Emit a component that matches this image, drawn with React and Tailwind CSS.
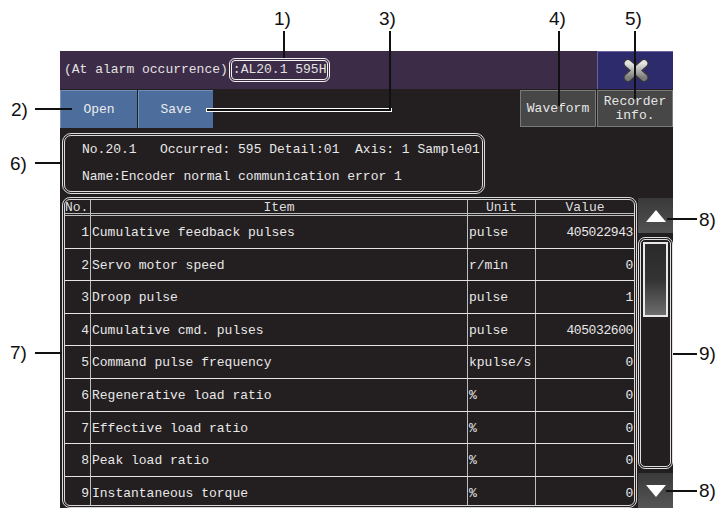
import React from "react";

const rows = [
  [1, "Cumulative feedback pulses", "pulse", "405022943"],
  [2, "Servo motor speed", "r/min", "0"],
  [3, "Droop pulse", "pulse", "1"],
  [4, "Cumulative cmd. pulses", "pulse", "405032600"],
  [5, "Command pulse frequency", "kpulse/s", "0"],
  [6, "Regenerative load ratio", "%", "0"],
  [7, "Effective load ratio", "%", "0"],
  [8, "Peak load ratio", "%", "0"],
  [9, "Instantaneous torque", "%", "0"],
];

function Label({ text, className }) {
  return (
    <div
      className={
        "absolute text-[19px] leading-none text-[#111] font-['Liberation_Sans',Arial,sans-serif] " +
        className
      }
    >
      {text}
    </div>
  );
}

function Line({ className }) {
  return <div className={"absolute bg-[#111] " + className} />;
}

function CloseIcon() {
  return (
    <svg width="26" height="23" viewBox="0 0 26 23">
      <defs>
        <linearGradient id="xg" x1="0" y1="0" x2="0" y2="1">
          <stop offset="0" stopColor="#e4e4e4" />
          <stop offset="1" stopColor="#7c7c7c" />
        </linearGradient>
      </defs>
      <path d="M5 4.5 L21 18.5 M21 4.5 L5 18.5" stroke="#3a3a3a" strokeWidth="9" strokeLinecap="round" />
      <path d="M5 4.5 L21 18.5 M21 4.5 L5 18.5" stroke="url(#xg)" strokeWidth="6.5" strokeLinecap="round" />
    </svg>
  );
}

export default function App() {
  return (
    <div className="relative w-[725px] h-[508px] bg-white overflow-hidden font-['Liberation_Mono','DejaVu_Sans_Mono',monospace] text-[13px]">
      <div className="pt-[51px] pl-[60px]">
        <div className="w-[613px] h-[457px] bg-[#231f20] flex flex-col">
          {/* Title bar */}
          <div className="h-[38px] flex">
            <div className="flex-1 bg-[#3d2c47] flex items-center pl-[4px] text-[#e2e2e2] whitespace-pre">
              <span>(At alarm occurrence)</span>
              <span className="ml-[1px] h-[24px] px-[1px] flex items-center border-[3px] border-double border-[#f2f2f2] rounded-[6px]">
                :AL20.1 595H
              </span>
            </div>
            <div className="w-[76px] bg-[#2d2b6c] border-t border-l border-[#6764a0] flex items-center justify-center">
              <CloseIcon />
            </div>
          </div>
          {/* Button row */}
          <div className="h-[39px] flex pt-[1px] gap-[1px]">
            <div className="w-[77px] bg-[#4d6e9d] border-t border-l border-[#7390ba] flex items-center justify-center text-[#ececec]">
              Open
            </div>
            <div className="w-[75px] bg-[#4d6e9d] border-t border-l border-[#7390ba] flex items-center justify-center text-[#ececec]">
              Save
            </div>
            <div className="flex-1" />
            <div className="w-[76px] mb-[1px] bg-[#474747] border border-[#7a7a7a] flex items-center justify-center text-[#e6e6e6]">
              Waveform
            </div>
            <div className="w-[76px] mb-[1px] bg-[#474747] border border-[#7a7a7a] flex flex-col items-center justify-center text-[#e6e6e6] leading-[14px]">
              <span>Recorder</span>
              <span>info.</span>
            </div>
          </div>
          {/* Info box */}
          <div className="mt-[5px] ml-[2px] w-[423px] h-[61px] border-[3px] border-double border-[#dcdcdc] rounded-[9px] flex flex-col justify-between pl-[17px] pt-[4px] pb-[5px] text-[#e8e8e8] whitespace-pre">
            <div>No.20.1   Occurred: 595 Detail:01  Axis: 1 Sample01</div>
            <div>Name:Encoder normal communication error 1</div>
          </div>
          {/* Table and scroll */}
          <div className="mt-[3px] flex flex-1 min-h-0">
            <div className="ml-[2px] w-[575px] border-[3px] border-double border-[#d9d9d9] rounded-[8px] overflow-hidden text-[#e8e8e8]">
              <div className="grid grid-cols-[25px_377px_68px_1fr] h-[16px] leading-[16px] border-b-[3px] border-double border-[#bdbdbd] text-[#dedede]">
                <div>No.</div>
                <div className="border-l border-[#bdbdbd] text-center">Item</div>
                <div className="border-l border-[#bdbdbd] text-center">Unit</div>
                <div className="border-l border-[#bdbdbd] text-center">Value</div>
              </div>
              {rows.map(([n, item, unit, val]) => (
                <div
                  key={n}
                  className="grid grid-cols-[25px_377px_68px_1fr] h-[32.6px] border-b border-[#e4e4e4] items-stretch"
                >
                  <div className="flex items-center justify-end pr-[1px] pt-[2px]">{n}</div>
                  <div className="border-l border-[#bdbdbd] flex items-center pl-[1px] pt-[2px] whitespace-pre">{item}</div>
                  <div className="border-l border-[#bdbdbd] flex items-center pl-[1px] pt-[2px]">{unit}</div>
                  <div className="border-l border-[#bdbdbd] flex items-center justify-end pr-[1px] pt-[2px] tracking-[-0.4px]">{val}</div>
                </div>
              ))}
            </div>
            <div className="ml-[1px] w-[35px] flex flex-col">
              <div className="mt-[1px] h-[35px] bg-gradient-to-b from-[#393939] to-[#525252] flex items-center justify-center">
                <svg width="20" height="12" viewBox="0 0 20 12">
                  <polygon points="10,0 20,12 0,12" fill="#ffffff" />
                </svg>
              </div>
              <div className="mt-[4px] h-[232px] border-[3px] border-double border-[#e0e0e0] rounded-[7px] bg-[#231f20] p-[2px]">
                <div className="h-[75px] border-2 border-[#e8e8e8] bg-gradient-to-b from-[#2a2a2a] via-[#333333] to-[#6e6e6e]" />
              </div>
              <div className="mt-[4px] flex-1 bg-gradient-to-b from-[#3a3a3a] to-[#555555] flex items-center justify-center">
                <svg width="20" height="12" viewBox="0 0 20 12">
                  <polygon points="0,0 20,0 10,12" fill="#ffffff" />
                </svg>
              </div>
            </div>
          </div>
        </div>
      </div>

      {/* Annotations */}
      <Label text="1)" className="left-[274px] top-[9px]" />
      <Line className="left-[283px] top-[31px] w-[2px] h-[27px]" />

      <Label text="2)" className="left-[11px] top-[100px]" />
      <Line className="left-[35px] top-[108px] w-[37px] h-[2px]" />

      <Label text="3)" className="left-[379px] top-[9px]" />
      <div className="absolute left-[206px] top-[108px] w-[186px] h-[4px] bg-[#111] border border-white" />
      <Line className="left-[389px] top-[31px] w-[2px] h-[79px]" />

      <Label text="4)" className="left-[549px] top-[9px]" />
      <Line className="left-[558px] top-[31px] w-[2px] h-[75px]" />

      <Label text="5)" className="left-[625px] top-[9px]" />
      <Line className="left-[634px] top-[31px] w-[2px] h-[68px]" />

      <Label text="6)" className="left-[10px] top-[154px]" />
      <Line className="left-[35px] top-[162px] w-[27px] h-[2px]" />

      <Label text="7)" className="left-[10px] top-[343px]" />
      <Line className="left-[35px] top-[352px] w-[27px] h-[2px]" />

      <Line className="left-[667px] top-[218px] w-[30px] h-[2px]" />
      <Label text="8)" className="left-[699px] top-[210px]" />

      <Line className="left-[673px] top-[353px] w-[24px] h-[2px]" />
      <Label text="9)" className="left-[699px] top-[344px]" />

      <Line className="left-[666px] top-[490px] w-[31px] h-[2px]" />
      <Label text="8)" className="left-[699px] top-[481px]" />
    </div>
  );
}
